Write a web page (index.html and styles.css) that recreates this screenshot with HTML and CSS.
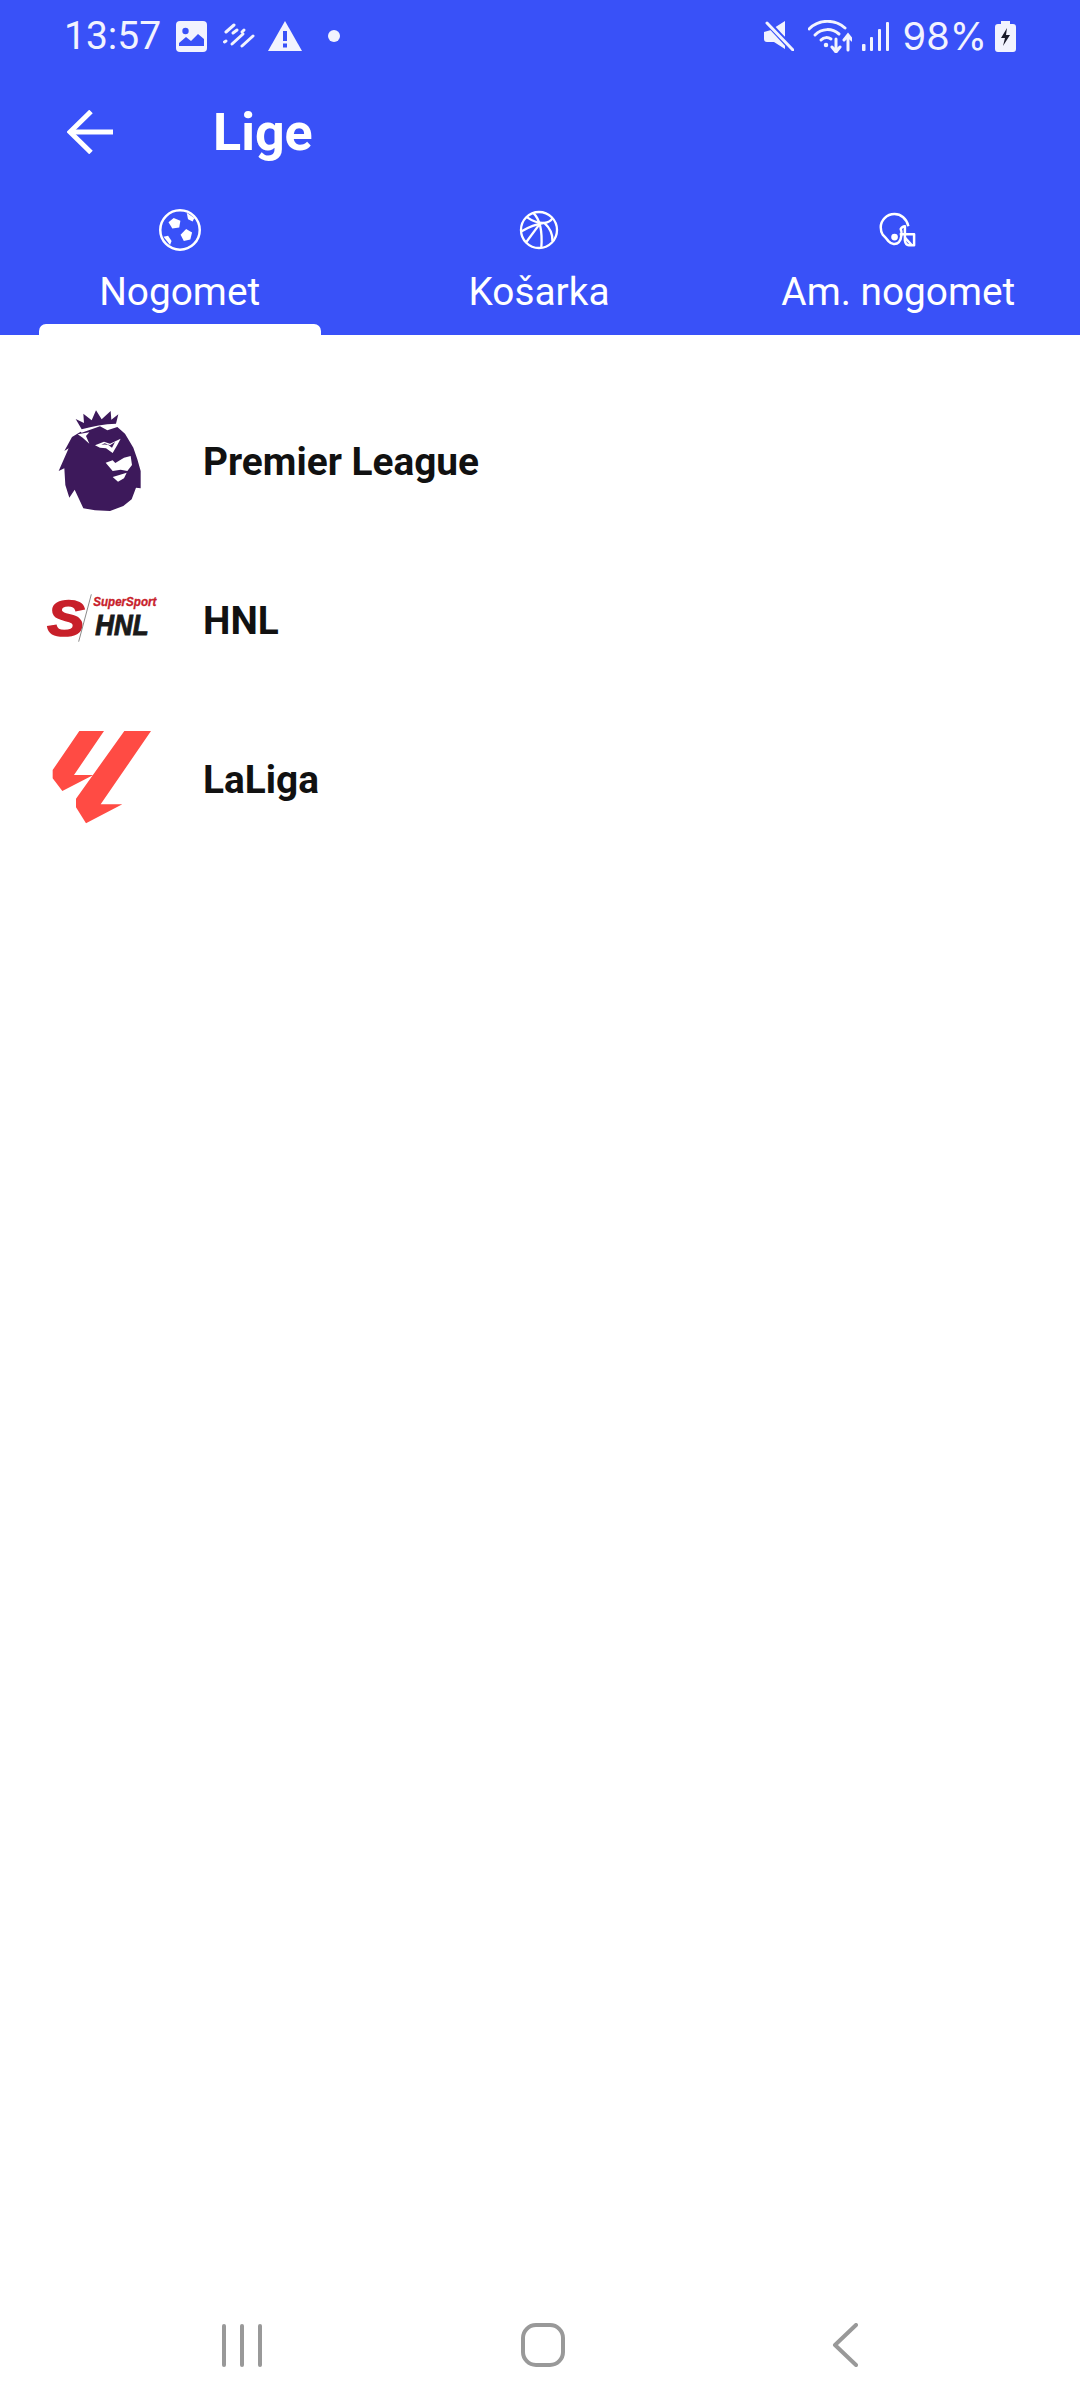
FILE: index.html
```html
<!DOCTYPE html>
<html lang="hr">
<head>
  <meta charset="UTF-8">
  <title>Lige</title>
  <link rel="stylesheet" href="styles.css">
</head>
<body>
  <div class="page">
    <header class="top">
      <div class="status">
        <div class="status-left">
          <span class="time">13:57</span>
          <svg class="st-image" viewBox="0 0 31 31"><rect width="31" height="31" rx="4" fill="#f2f3fe"/><circle cx="9.5" cy="10" r="3.2" fill="#3951f8"/><path d="M3 25 L3 22 L10 16 L15 20 L22 13 L28 18 L28 25 Z" fill="#3951f8"/></svg>
          <svg class="st-streak" viewBox="0 0 32 26" stroke="#f2f3fe" stroke-width="3" stroke-linecap="round"><path d="M3 9 L11 2"/><path d="M1.5 19 L3 18"/><path d="M9 21 L20 11"/><path d="M10 10 L14 7"/><path d="M19 9 L21 7"/><path d="M19 23 L30 13"/></svg>
          <svg class="st-warn" viewBox="0 0 34 30"><path d="M17 0 L34 30 L0 30 Z" fill="#f2f3fe"/><rect x="15" y="10" width="4" height="10" fill="#3951f8"/><rect x="15" y="22.500" width="4" height="4" fill="#3951f8"/></svg>
          <span class="st-dot"></span>
        </div>
        <div class="status-right">
          <svg class="st-mute" viewBox="0 0 30 30"><path d="M0 11 L7 9 L21 22 L21 28 L10 21 L3 21 Q0 21 0 18 Z M10 7 L21 0 L21 16 Z" fill="#f2f3fe"/><path d="M3 1 L29 29" stroke="#3951f8" stroke-width="6"/><path d="M3 2 L29 29" stroke="#f2f3fe" stroke-width="3" stroke-linecap="round"/></svg>
          <svg class="st-wifi" viewBox="0 0 44 33" fill="none" stroke="#f2f3fe" stroke-width="3" stroke-linecap="round"><path d="M1 9 C11 -1 27 -1 37 8"/><path d="M7 15 C14 8 24 8 31 14"/><path d="M13 20 C16 17 20 17 23 19"/><circle cx="18" cy="25" r="1.500" fill="#f2f3fe" stroke-width="1.500"/><path d="M28 19 V32 M24 27 L28 32 L32 27"/><path d="M40 30 V15 M36 20 L40 15 L44 20"/></svg>
          <svg class="st-signal" viewBox="0 0 27 29" fill="#f2f3fe"><rect x="0" y="22" width="3.500" height="7" rx="1"/><rect x="8" y="15" width="3" height="14" rx="1"/><rect x="16" y="7" width="3" height="22" rx="1"/><rect x="24" y="0" width="3" height="29" rx="1"/></svg>
          <span class="batt-text">98%</span>
          <svg class="st-batt" viewBox="0 0 21 31"><path d="M6 0 H15 V3 H18 Q21 3 21 6 V28 Q21 31 18 31 H3 Q0 31 0 28 V6 Q0 3 3 3 H6 Z" fill="#f2f3fe"/><path d="M12 7 L6 17 H10 L8 25 L15 14 H11 Z" fill="#1a1a2a"/></svg>
        </div>
      </div>

      <div class="appbar">
        <svg class="back" viewBox="0 0 46 44" fill="none" stroke="#fff" stroke-width="5"><path d="M46 22 H3"/><path d="M24 1.500 L3 22 L24 42.500"/></svg>
        <h1 class="title">Lige</h1>
      </div>

      <nav class="tabs">
        <div class="tab">
          <svg class="tab-icon" viewBox="0 0 24 24"><circle cx="12" cy="12" r="10.300" fill="none" stroke="#fff" stroke-width="1.300"/><path d="M8.700 5.700 L12.200 7.200 L11.600 10.700 L8 11.200 L6 8 Z" fill="#fff"/><path d="M15.200 11.500 L18.300 13.300 L17.400 17 L14 17.700 L12.300 14.500 Z" fill="#fff"/><path d="M15.500 3 L19.500 5.800 L18.600 7.500 L16.200 6.400 Z" fill="#fff"/><path d="M3.400 15.500 L5.800 15 L7.600 17.800 L6.800 19.800 Z" fill="#fff"/></svg>
          <span class="tab-label">Nogomet</span>
          <span class="tab-line"></span>
        </div>
        <div class="tab">
          <svg class="tab-icon" viewBox="0 0 24 24" fill="none" stroke="#fff" stroke-width="1.200"><circle cx="12" cy="12" r="9.400"/><path d="M5.600 5.300 C8.500 7.300 12 8.500 14.800 8.300 C16.800 8.100 18.400 7 19 5.900"/><path d="M2.700 12.800 C6.500 10.500 10 9 14.800 8.300"/><path d="M9 3.100 C11.500 5.500 14 11 13.200 21.300"/><path d="M14.800 8.300 C17.500 10.800 19.200 14.500 19 17.800"/><path d="M5.200 18.500 L12.400 8.800"/></svg>
          <span class="tab-label">Košarka</span>
        </div>
        <div class="tab">
          <svg class="tab-icon" viewBox="0 0 24 24" fill="none" stroke="#fff" stroke-width="1.300" stroke-linejoin="round"><path d="M17.400 10 C16.500 6 13.500 3.700 10.200 3.700 C6 3.700 3 7 3 10.600 C3 12 3.300 13.400 4 14.400 C5 15.400 6 16.500 7 17.800 C8.500 19.500 11 19.800 12.500 18.300 C14 16.500 14.200 12.800 13.400 11.500 C14 10.300 14.800 10 15.600 10 L15.600 17.500 C15.800 18.800 16.600 19.900 17.600 19.900 L20.400 19.900 L20.400 14.200 L12.900 14.200"/><path d="M15.600 16 L19 19.700"/><circle cx="10.200" cy="15.700" r="1.100" fill="#fff"/></svg>
          <span class="tab-label">Am. nogomet</span>
        </div>
      </nav>
    </header>

    <main class="list">
      <div class="row">
        <svg class="logo" viewBox="0 18 420 390">
          <path class="lion" d="M137 84 L162 96 L160 68 L185 88 L198 58 L215 85 L242 60 L244 86 L265 70 L258 98 Q205 100 155 115 Z"/>
          <path class="lion" d="M152 122 L126 138 L103 180 L116 172 L86 240 L103 232 L106 282 L118 320 L134 296 L160 352 L195 358 L240 360 L280 345 L305 325 L318 290 L332 292 L332 240 L322 205 L310 170 L298 150 L285 128 L262 108 L232 118 L210 106 L155 125 Z"/>
          <path class="lion-cut" d="M143 130 L178 124 L168 135 L178 158 L158 140 Z"/>
          <path class="lion-cut" d="M195 163 L222 152 L240 158 L272 143 L262 162 L248 186 L228 172 L210 170 Z"/>
          <path class="lion" d="M214 161 L232 160 L246 170 L255 153 L240 163 L224 157 Z"/>
          <path class="lion-cut" d="M227 215 L248 208 L256 216 L282 200 L302 195 L306 222 L292 240 L272 236 L248 240 Z"/>
          <path class="lion-cut" d="M248 258 L268 252 L290 245 L282 262 L264 272 Z"/>
        </svg>
        <span class="row-name">Premier League</span>
      </div>
      <div class="row">
        <svg class="logo" viewBox="0 -75 420 390">
          <text class="hnl-s" x="52" y="164" textLength="112" lengthAdjust="spacingAndGlyphs">S</text>
          <path d="M184 40 L146 182" stroke="#8a8a8a" stroke-width="3"/>
          <text class="hnl-ss" x="190" y="76" textLength="189" lengthAdjust="spacingAndGlyphs">SuperSport</text>
          <text class="hnl-name" x="196" y="162" textLength="160" lengthAdjust="spacingAndGlyphs">HNL</text>
        </svg>
        <span class="row-name">HNL</span>
      </div>
      <div class="row">
        <svg class="logo" viewBox="0 -15 420 390">
          <path class="laliga" d="M148 33 L222 33 L132 165 L190 165 L97 213 L68 175 L68 150 Z"/>
          <path class="laliga" d="M283 33 L363 33 L212 253 L277 253 L168 310 L138 262 L138 236 Z"/>
        </svg>
        <span class="row-name">LaLiga</span>
      </div>
    </main>

    <footer class="navbar">
      <svg class="nav-recents" viewBox="0 0 42 43" stroke="#999" stroke-width="4" stroke-linecap="round"><path d="M3 2 V41"/><path d="M21 2 V41"/><path d="M39 2 V41"/></svg>
      <svg class="nav-home" viewBox="0 0 44 44" fill="none" stroke="#999" stroke-width="4"><rect x="2" y="2" width="40" height="40" rx="13"/></svg>
      <svg class="nav-back" viewBox="0 0 26 44" fill="none" stroke="#999" stroke-width="4" stroke-linecap="round" stroke-linejoin="round"><path d="M24 2 L3 22 L24 42"/></svg>
    </footer>
  </div>
</body>
</html>
```

FILE: styles.css
```css
body {
  margin: 0;
  font-family: Roboto, sans-serif;
  background: #fff;
  color: #111;
}

.page {
  width: 1080px;
  height: 2408px;
  display: flex;
  flex-direction: column;
  overflow: hidden;
}

.top {
  height: 335px;
  background: #3951f8;
  color: #fff;
  display: flex;
  flex-direction: column;
  flex-shrink: 0;
}

.status {
  height: 72px;
  display: flex;
  justify-content: space-between;
  align-items: center;
  padding: 0 64px 0 64px;
  color: #f2f3fe;
}

.status-left,
.status-right {
  display: flex;
  align-items: center;
}

.time {
  font-size: 39px;
  line-height: 72px;
}

.batt-text {
  font-family: Inter, sans-serif;
  font-size: 38px;
  line-height: 72px;
  margin-left: 14px;
}

.st-image { width: 31px; height: 31px; margin-left: 15px; }
.st-streak { width: 32px; height: 26px; margin-left: 16px; }
.st-warn { width: 34px; height: 30px; margin-left: 13px; }
.st-dot { width: 12px; height: 12px; border-radius: 50%; background: #f2f3fe; margin-left: 26px; }
.st-mute { width: 30px; height: 30px; }
.st-wifi { width: 44px; height: 33px; margin-left: 14px; }
.st-signal { width: 27px; height: 29px; margin-left: 10px; }
.st-batt { width: 21px; height: 31px; margin-left: 8px; }

.appbar {
  height: 120px;
  display: flex;
  align-items: center;
  padding-left: 67px;
}

.back {
  width: 46px;
  height: 44px;
}

.title {
  margin: 0 0 0 100px;
  font-size: 52px;
  font-weight: 700;
}

.tabs {
  flex: 1;
  display: flex;
  padding-right: 2px;
}

.tab {
  flex: 1;
  display: flex;
  flex-direction: column;
  align-items: center;
  padding-top: 15px;
}

.tab-icon {
  width: 46px;
  height: 46px;
}

.tab-label {
  font-size: 38.8px;
  line-height: 50px;
  margin-top: 14px;
}

.tab-line {
  width: 282px;
  height: 11px;
  margin-top: auto;
  background: #fff;
  border-radius: 7px 7px 0 0;
}

.list {
  flex: 1;
  padding-top: 47px;
}

.row {
  height: 159px;
  display: flex;
  align-items: center;
  padding-left: 30px;
}

.logo {
  width: 140px;
  height: 130px;
  flex-shrink: 0;
}

.row-name {
  margin-left: 33px;
  font-size: 38.8px;
  font-weight: 700;
  color: #111;
}

.lion { fill: #3d195b; }
.lion-cut { fill: #fff; }
.laliga { fill: #ff4b44; }

.hnl-s,
.hnl-ss,
.hnl-name {
  font-family: "Liberation Sans", sans-serif;
  font-weight: 700;
  font-style: italic;
}

.hnl-s { font-size: 150px; fill: #c8202a; stroke: #c8202a; stroke-width: 5px; }
.hnl-ss { font-size: 36px; fill: #c8202a; stroke: #c8202a; stroke-width: 1px; }
.hnl-name { font-size: 86px; fill: #1a1a1a; stroke: #1a1a1a; stroke-width: 3px; }

.navbar {
  height: 126px;
  display: flex;
  align-items: center;
  padding-left: 221px;
  flex-shrink: 0;
}

.nav-recents { width: 42px; height: 43px; }
.nav-home { width: 44px; height: 44px; margin-left: 258px; }
.nav-back { width: 26px; height: 44px; margin-left: 267px; }
```
